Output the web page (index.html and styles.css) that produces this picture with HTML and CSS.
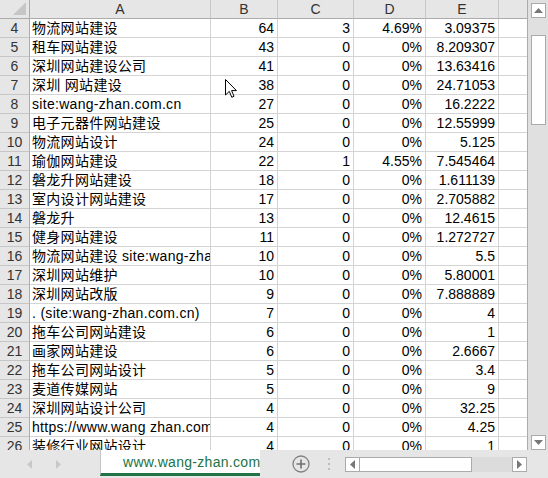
FILE: index.html
```html
<!DOCTYPE html>
<html>
<head>
<meta charset="utf-8">
<link rel="stylesheet" href="styles.css">
</head>
<body>
<div class="app">
  <div class="main">
    <div class="sheet">
      <div class="grid">
        <div class="corner"><span class="tri"></span></div>
        <div class="ch">A</div><div class="ch">B</div><div class="ch">C</div><div class="ch">D</div><div class="ch">E</div><div class="ch last"></div>

        <div class="rh">4</div><div class="c t">物流网站建设</div><div class="c n">64</div><div class="c n">3</div><div class="c n">4.69%</div><div class="c n">3.09375</div><div class="c last"></div>
        <div class="rh">5</div><div class="c t">租车网站建设</div><div class="c n">43</div><div class="c n">0</div><div class="c n">0%</div><div class="c n">8.209307</div><div class="c last"></div>
        <div class="rh">6</div><div class="c t">深圳网站建设公司</div><div class="c n">41</div><div class="c n">0</div><div class="c n">0%</div><div class="c n">13.63416</div><div class="c last"></div>
        <div class="rh">7</div><div class="c t">深圳 网站建设</div><div class="c n">38</div><div class="c n">0</div><div class="c n">0%</div><div class="c n">24.71053</div><div class="c last"></div>
        <div class="rh">8</div><div class="c t">site:wang-zhan.com.cn</div><div class="c n">27</div><div class="c n">0</div><div class="c n">0%</div><div class="c n">16.2222</div><div class="c last"></div>
        <div class="rh">9</div><div class="c t">电子元器件网站建设</div><div class="c n">25</div><div class="c n">0</div><div class="c n">0%</div><div class="c n">12.55999</div><div class="c last"></div>
        <div class="rh">10</div><div class="c t">物流网站设计</div><div class="c n">24</div><div class="c n">0</div><div class="c n">0%</div><div class="c n">5.125</div><div class="c last"></div>
        <div class="rh">11</div><div class="c t">瑜伽网站建设</div><div class="c n">22</div><div class="c n">1</div><div class="c n">4.55%</div><div class="c n">7.545464</div><div class="c last"></div>
        <div class="rh">12</div><div class="c t">磐龙升网站建设</div><div class="c n">18</div><div class="c n">0</div><div class="c n">0%</div><div class="c n">1.611139</div><div class="c last"></div>
        <div class="rh">13</div><div class="c t">室内设计网站建设</div><div class="c n">17</div><div class="c n">0</div><div class="c n">0%</div><div class="c n">2.705882</div><div class="c last"></div>
        <div class="rh">14</div><div class="c t">磐龙升</div><div class="c n">13</div><div class="c n">0</div><div class="c n">0%</div><div class="c n">12.4615</div><div class="c last"></div>
        <div class="rh">15</div><div class="c t">健身网站建设</div><div class="c n">11</div><div class="c n">0</div><div class="c n">0%</div><div class="c n">1.272727</div><div class="c last"></div>
        <div class="rh">16</div><div class="c t">物流网站建设 site:wang-zhan.com.cn</div><div class="c n">10</div><div class="c n">0</div><div class="c n">0%</div><div class="c n">5.5</div><div class="c last"></div>
        <div class="rh">17</div><div class="c t">深圳网站维护</div><div class="c n">10</div><div class="c n">0</div><div class="c n">0%</div><div class="c n">5.80001</div><div class="c last"></div>
        <div class="rh">18</div><div class="c t">深圳网站改版</div><div class="c n">9</div><div class="c n">0</div><div class="c n">0%</div><div class="c n">7.888889</div><div class="c last"></div>
        <div class="rh">19</div><div class="c t">. (site:wang-zhan.com.cn)</div><div class="c n">7</div><div class="c n">0</div><div class="c n">0%</div><div class="c n">4</div><div class="c last"></div>
        <div class="rh">20</div><div class="c t">拖车公司网站建设</div><div class="c n">6</div><div class="c n">0</div><div class="c n">0%</div><div class="c n">1</div><div class="c last"></div>
        <div class="rh">21</div><div class="c t">画家网站建设</div><div class="c n">6</div><div class="c n">0</div><div class="c n">0%</div><div class="c n">2.6667</div><div class="c last"></div>
        <div class="rh">22</div><div class="c t">拖车公司网站设计</div><div class="c n">5</div><div class="c n">0</div><div class="c n">0%</div><div class="c n">3.4</div><div class="c last"></div>
        <div class="rh">23</div><div class="c t">麦道传媒网站</div><div class="c n">5</div><div class="c n">0</div><div class="c n">0%</div><div class="c n">9</div><div class="c last"></div>
        <div class="rh">24</div><div class="c t">深圳网站设计公司</div><div class="c n">4</div><div class="c n">0</div><div class="c n">0%</div><div class="c n">32.25</div><div class="c last"></div>
        <div class="rh">25</div><div class="c t">https://www.wang zhan.com.cn</div><div class="c n">4</div><div class="c n">0</div><div class="c n">0%</div><div class="c n">4.25</div><div class="c last"></div>
        <div class="rh">26</div><div class="c t">装修行业网站设计</div><div class="c n">4</div><div class="c n">0</div><div class="c n">0%</div><div class="c n">1</div><div class="c last"></div>
      </div>
      <svg class="cursor" width="13" height="20" viewBox="0 0 13 20"><path d="M0.5 0.5 L0.5 16 L4.3 12.4 L6.8 18.3 L9 17.3 L6.6 11.6 L11.5 11.6 Z" fill="#fff" stroke="#000" stroke-width="1" stroke-linejoin="miter"/></svg>
    </div>
    <div class="vscroll">
      <div class="sbtn"><svg width="9" height="5" viewBox="0 0 9 5"><path d="M0 5 L4.5 0 L9 5 Z" fill="#777"/></svg></div>
      <div class="vtrack"><div class="vthumb"></div></div>
      <div class="sbtn"><svg width="9" height="5" viewBox="0 0 9 5"><path d="M0 0 L4.5 5 L9 0 Z" fill="#777"/></svg></div>
    </div>
  </div>
  <div class="bottom">
    <div class="nav">
      <svg width="5" height="9" viewBox="0 0 5 9"><path d="M5 0 L0 4.5 L5 9 Z" fill="#c8c8c8"/></svg>
      <svg width="5" height="9" viewBox="0 0 5 9"><path d="M0 0 L5 4.5 L0 9 Z" fill="#c8c8c8"/></svg>
    </div>
    <div class="tab"><span class="tabtext">www.wang-zhan.com.cn</span></div>
    <div class="add">
      <svg width="18" height="18" viewBox="0 0 18 18"><circle cx="9" cy="9" r="8" fill="none" stroke="#808080" stroke-width="1.3"/><path d="M9 4.5 V13.5 M4.5 9 H13.5" stroke="#707070" stroke-width="1.6"/></svg>
    </div>
    <div class="dots"><i></i><i></i><i></i></div>
    <div class="hscroll">
      <div class="sbtn h"><svg width="5" height="9" viewBox="0 0 5 9"><path d="M5 0 L0 4.5 L5 9 Z" fill="#777"/></svg></div>
      <div class="hthumb"></div>
      <div class="htrack"></div>
      <div class="sbtn h"><svg width="5" height="9" viewBox="0 0 5 9"><path d="M0 0 L5 4.5 L0 9 Z" fill="#777"/></svg></div>
    </div>
  </div>
</div>
</body>
</html>
```

FILE: styles.css
```css
* { box-sizing: border-box; }
html, body { margin: 0; padding: 0; }
body {
  width: 548px;
  height: 478px;
  overflow: hidden;
  background: #e6e6e6;
  font-family: "Liberation Sans", "Noto Sans CJK SC", Arial, sans-serif;
  font-size: 14px;
  color: #000;
}
.app { display: flex; flex-direction: column; width: 548px; height: 478px; }
.main { display: flex; height: 450px; }
.sheet {
  position: relative;
  width: 528px;
  height: 450px;
  overflow: hidden;
  background: #fff;
  border-right: 1px solid #ababab;
}
.grid {
  display: grid;
  grid-template-columns: 30px 181px 67px 76px 72px 73px 28px;
  grid-auto-rows: 19px;
}
.corner {
  position: relative;
  background: #e6e6e6;
  border-right: 1px solid #ababab;
  border-bottom: 1px solid #ababab;
}
.tri {
  position: absolute;
  right: 3px;
  bottom: 3px;
  width: 0; height: 0;
  border-left: 13px solid transparent;
  border-bottom: 13px solid #c6c6c6;
}
.ch {
  background: #e6e6e6;
  border-right: 1px solid #c6c6c6;
  border-bottom: 1px solid #ababab;
  text-align: center;
  line-height: 18px;
  color: #333;
}
.ch.last { border-right: none; }
.rh {
  background: #e6e6e6;
  border-right: 1px solid #ababab;
  border-bottom: 1px solid #c6c6c6;
  text-align: center;
  line-height: 18px;
  color: #333;
}
.c {
  border-right: 1px solid #d4d4d4;
  border-bottom: 1px solid #d4d4d4;
  line-height: 18px;
  white-space: nowrap;
  overflow: hidden;
}
.c.last { border-right: none; }
.t { padding-left: 2px; letter-spacing: 0.3px; }
.n { text-align: right; padding-right: 3px; }
.cursor { position: absolute; left: 225px; top: 79px; }

.vscroll {
  width: 20px;
  height: 450px;
  display: flex;
  flex-direction: column;
  align-items: center;
  padding: 3px 0 0 1px;
  background: #e0e0e0;
}
.sbtn {
  width: 15px;
  height: 15px;
  background: #fff;
  border: 1px solid #ababab;
  display: flex;
  align-items: center;
  justify-content: center;
  flex: none;
}
.vtrack {
  flex: 1;
  width: 15px;
  padding-top: 17px;
  padding-bottom: 4px;
}
.vthumb {
  width: 15px;
  height: 90px;
  background: #fff;
  border: 1px solid #ababab;
}

.bottom {
  height: 28px;
  display: flex;
  align-items: stretch;
  background: #e6e6e6;
}
.nav {
  width: 100px;
  display: flex;
  align-items: center;
  gap: 24px;
  padding-left: 27px;
}
.tab {
  width: 160px;
  background: #fff;
  border-left: 1px solid #c6c6c6;
  border-bottom: 3px solid #217346;
  margin-bottom: 2px;
  overflow: hidden;
  white-space: nowrap;
  padding-left: 22px;
  line-height: 24px;
  color: #217346;
  font-size: 14px;
  letter-spacing: 0.3px;
}
.add {
  width: 80px;
  display: flex;
  align-items: center;
  padding-left: 32px;
}
.dots {
  display: flex;
  flex-direction: column;
  justify-content: center;
  gap: 3px;
  margin-left: -12px;
  width: 18px;
}
.dots i {
  display: block;
  width: 2px;
  height: 2px;
  background: #bdbdbd;
}
.hscroll {
  display: flex;
  align-items: center;
  margin-left: -1px;
  height: 28px;
}
.sbtn.h { width: 15px; height: 15px; }
.hthumb {
  width: 112px;
  height: 15px;
  background: #fff;
  border: 1px solid #ababab;
  border-left: none;
}
.htrack {
  width: 40px;
  height: 15px;
  background: #dcdcdc;
}
```
